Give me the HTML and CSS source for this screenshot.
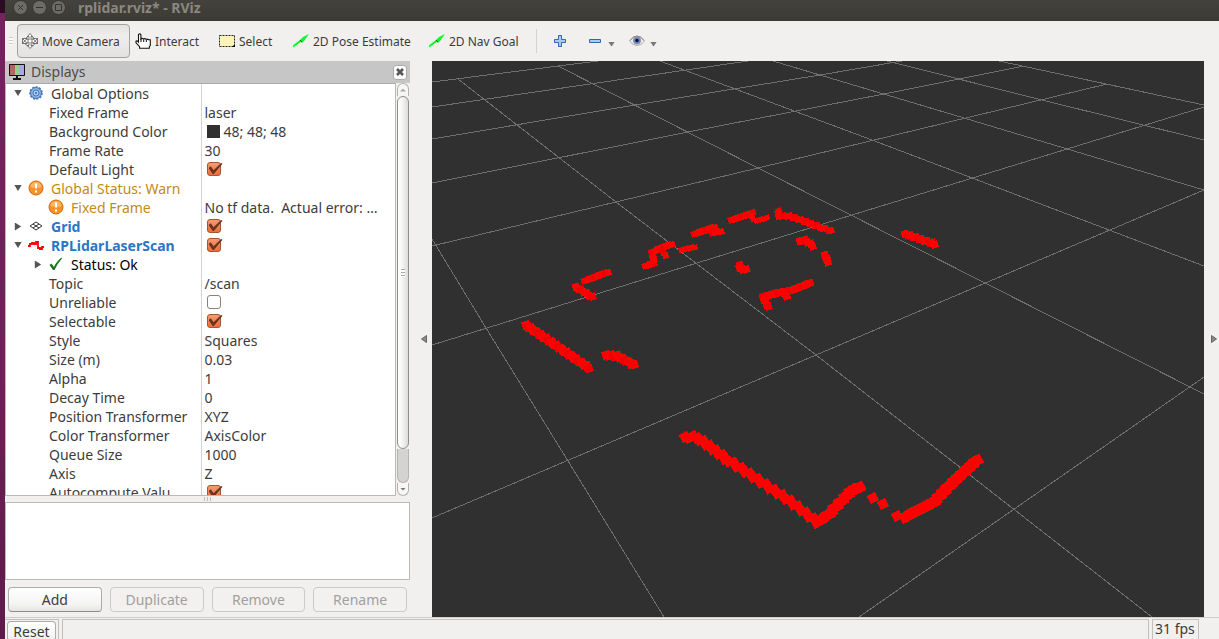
FILE: index.html
```html
<!DOCTYPE html>
<html lang="en">
<head>
<meta charset="utf-8">
<title>rplidar.rviz* - RViz</title>
<link rel="stylesheet" href="styles.css">
</head>
<body>
<div class="desktop">
<div class="window">
  <header class="titlebar">
    <button class="win-btn" aria-label="Close"><svg viewBox="0 0 15 15"><circle cx="7.500" cy="7.500" r="7"/><path d="M5 5l5 5M10 5l-5 5"/></svg></button>
    <button class="win-btn" aria-label="Minimize"><svg viewBox="0 0 15 15"><circle cx="7.500" cy="7.500" r="7"/><path d="M4 7.500h7"/></svg></button>
    <button class="win-btn" aria-label="Maximize"><svg viewBox="0 0 15 15"><circle cx="7.500" cy="7.500" r="7"/><path d="M4.500 4.500h6v6h-6z"/></svg></button>
    <h1 class="title">rplidar.rviz* - RViz</h1>
  </header>

  <nav class="toolbar" aria-label="Tools">
    <span class="grip"></span>
    <button class="tool tool-active w-move">
      <svg class="i16" viewBox="0 0 16 16"><g fill="#fff" stroke="#555" stroke-width=".8"><path d="M8 .5L10.500 3.500H9V7h2V5.500H15.500V10.500H11V9H9v3.500h1.500L8 15.500 5.500 12.500H7V9H5v1.500H.5v-5H5V7h2V3.500H5.500z"/><path d="M.5 5.500L5 10.500M5 5.500L.5 10.500M11 5.500l4.500 5M15.500 5.500l-4.500 5M3 10.500q2 3 3 2.500M13 10.500q-2 3-3 2.500M4 5.500q1-2 2-2M12 5.500q-1-2-2-2" fill="none"/></g></svg>
      <span>Move Camera</span></button>
    <button class="tool w-interact">
      <svg class="i16" viewBox="0 0 16 16"><path d="M3.500 9V1.500q1.200-1.300 2.400 0V6q1-1.200 2.600 0 1.300-.8 2.600.3 1.200-.6 2.600.5h1.600v5.700l-1 1.200v1.600H4.600v-1.600L1 9.800V8.200q1-.8 2.500.8z" fill="#fff" stroke="#111" stroke-width="1.100"/><path d="M6 6v3M8.700 6.500V9M11.300 7v2" stroke="#111"/></svg>
      <span>Interact</span></button>
    <button class="tool w-select">
      <svg class="i16" viewBox="0 0 16 16"><path d="M.5 2.500h15v11H.5z" fill="#fbf3b8" stroke="#222" stroke-dasharray="2 1"/><path d="M16 11v3h-3z" fill="#000"/></svg>
      <span>Select</span></button>
    <button class="tool w-pose">
      <svg class="i16" viewBox="0 0 16 16"><path d="M6 8l4-4 6-3-5 7-2 2z" fill="#0f2"/><path d="M0 13.500L8 7.500" stroke="#0f2" stroke-width="2"/><path d="M7 7l2 2" stroke="#087a18"/></svg>
      <span>2D Pose Estimate</span></button>
    <button class="tool w-nav">
      <svg class="i16" viewBox="0 0 16 16"><path d="M6 8l4-4 6-3-5 7-2 2z" fill="#0f2"/><path d="M0 13.500L8 7.500" stroke="#0f2" stroke-width="2"/><path d="M7 7l2 2" stroke="#087a18"/></svg>
      <span>2D Nav Goal</span></button>
    <span class="sep"></span>
    <button class="tool icon-only w-plus" aria-label="Add tool"><svg class="i12" viewBox="0 0 12 12"><path d="M4.500.5h3v4h4v3h-4v4h-3v-4h-4v-3h4z" fill="#a9cbea" stroke="#2f69ad"/></svg></button>
    <button class="tool icon-only w-drop" aria-label="Remove tool"><svg class="i12" viewBox="0 0 12 12"><path d="M.5 4.500h11v3H.5z" fill="#a9cbea" stroke="#2f69ad"/></svg><span class="drop"></span></button>
    <button class="tool icon-only w-eye" aria-label="Visibility"><svg class="i16" viewBox="0 0 16 16"><path d="M.5 8Q4 3 8 3t7.500 5Q12 12.500 8 12.500T.5 8z" fill="#eee" stroke="#aaa"/><path d="M1 7.500Q4 3 8 3t7 4.500" fill="none" stroke="#888"/><circle cx="8" cy="7.500" r="3.600" fill="#6a83c4" stroke="#8c93a8"/><circle cx="8" cy="7.500" r="1.700" fill="#0a1240"/></svg><span class="drop"></span></button>
  </nav>

  <div class="main">
    <aside class="dock">
      <div class="dock-head">
        <svg class="i16" viewBox="0 0 16 16"><path d="M.5.5h15v11H.5z" fill="#111" stroke="#111"/><path d="M1 1h5v10H1z" fill="#b56464"/><path d="M6 1h4v10H6z" fill="#8fd08f"/><path d="M10 1h5v10h-5z" fill="#a8a8e8"/><path d="M7 12h2v2h3v2H4v-2h3z" fill="#111"/></svg>
        <h2 class="dock-title">Displays</h2>
        <button class="close" aria-label="Close panel"><svg viewBox="0 0 8 8"><path d="M1 1l6 6M7 1L1 7" stroke="#555" stroke-width="2.600"/></svg></button>
      </div>
      <div class="tree-wrap">
        <div class="tree-clip">
        <table class="tree">
          <tr><th><span class="cell top"><button class="exp open" aria-label="Collapse"></button><svg class="i16" viewBox="0 0 16 16"><circle cx="8" cy="8" r="5.500" fill="#8db4e2" stroke="#4276b8"/><circle cx="8" cy="8" r="6" fill="none" stroke="#4276b8" stroke-width="1.600" stroke-dasharray="2 1.400"/><circle cx="8" cy="8" r="3" fill="#b7d0ee" stroke="#4276b8"/><circle cx="8" cy="8" r="1" fill="#2d5fa0"/></svg>Global Options</span></th><td></td></tr>
          <tr><th><span class="cell prop">Fixed Frame</span></th><td>laser</td></tr>
          <tr><th><span class="cell prop">Background Color</span></th><td><span class="color"><i class="swatch"></i>48; 48; 48</span></td></tr>
          <tr><th><span class="cell prop">Frame Rate</span></th><td>30</td></tr>
          <tr><th><label class="cell prop" for="c1">Default Light</label></th><td><input id="c1" class="check" type="checkbox" checked></td></tr>
          <tr><th><span class="cell top warn"><button class="exp open" aria-label="Collapse"></button><svg class="i16" viewBox="0 0 16 16"><circle cx="8" cy="8" r="7" fill="#f6922a" stroke="#d26a08"/><path d="M2.500 7a5.500 5 0 0 1 11 0q-5 2-11 0z" fill="#fbb765"/><path d="M8 3.500v5M8 10.500v2" stroke="#fff" stroke-width="2"/></svg>Global Status: Warn</span></th><td></td></tr>
          <tr><th><span class="cell sub warn"><svg class="i16" viewBox="0 0 16 16"><circle cx="8" cy="8" r="7" fill="#f6922a" stroke="#d26a08"/><path d="M2.500 7a5.500 5 0 0 1 11 0q-5 2-11 0z" fill="#fbb765"/><path d="M8 3.500v5M8 10.500v2" stroke="#fff" stroke-width="2"/></svg>Fixed Frame</span></th><td class="ellipsis">No tf data.&nbsp; Actual error: …</td></tr>
          <tr><th><label class="cell top link" for="c2"><button class="exp shut" aria-label="Expand"></button><svg class="i16" viewBox="0 0 16 16"><path d="M2 8l6-4 6 4-6 4zM5 6l6 4M11 6l-6 4" fill="none" stroke="#333"/></svg>Grid</label></th><td><input id="c2" class="check" type="checkbox" checked></td></tr>
          <tr><th><label class="cell top link" for="c3"><button class="exp open" aria-label="Collapse"></button><svg class="i16" viewBox="0 0 16 16"><path d="M0 9h2V7h2V6h2v1h2V5h2v6h2v1h2v-2h2" fill="none" stroke="#f00" stroke-width="1.800"/></svg>RPLidarLaserScan</label></th><td><input id="c3" class="check" type="checkbox" checked></td></tr>
          <tr><th><span class="cell sub ok"><button class="exp shut" aria-label="Expand"></button><svg class="i16" viewBox="0 0 16 16"><path d="M1.500 9l2-1.500L6 11Q8 6 13.500 1.500L14 2.500Q9 8 6.500 14H5z" fill="#19751f"/></svg>Status: Ok</span></th><td></td></tr>
          <tr><th><span class="cell prop">Topic</span></th><td>/scan</td></tr>
          <tr><th><label class="cell prop" for="c4">Unreliable</label></th><td><input id="c4" class="check" type="checkbox"></td></tr>
          <tr><th><label class="cell prop" for="c5">Selectable</label></th><td><input id="c5" class="check" type="checkbox" checked></td></tr>
          <tr><th><span class="cell prop">Style</span></th><td>Squares</td></tr>
          <tr><th><span class="cell prop">Size (m)</span></th><td>0.03</td></tr>
          <tr><th><span class="cell prop">Alpha</span></th><td>1</td></tr>
          <tr><th><span class="cell prop">Decay Time</span></th><td>0</td></tr>
          <tr><th><span class="cell prop">Position Transformer</span></th><td>XYZ</td></tr>
          <tr><th><span class="cell prop">Color Transformer</span></th><td>AxisColor</td></tr>
          <tr><th><span class="cell prop">Queue Size</span></th><td>1000</td></tr>
          <tr><th><span class="cell prop">Axis</span></th><td>Z</td></tr>
          <tr><th><label class="cell prop" for="c6">Autocompute Valu</label></th><td><input id="c6" class="check" type="checkbox" checked></td></tr>
        </table>
        </div>
        <div class="scroll">
          <span class="scroll-end up"></span>
          <span class="thumb"><i class="lines"></i></span>
          <span class="track"></span>
          <span class="scroll-end down"></span>
        </div>
      </div>
      <div class="splitter"><i></i><i></i><i></i></div>
      <div class="help"></div>
      <div class="actions">
        <button class="btn">Add</button>
        <button class="btn" disabled>Duplicate</button>
        <button class="btn" disabled>Remove</button>
        <button class="btn" disabled>Rename</button>
      </div>
    </aside>

    <button class="gutter gutter-left" aria-label="Hide left dock"><svg viewBox="0 0 6 8"><path d="M5.500.5v7L.5 4z" fill="#888" stroke="#666"/></svg></button>
    <svg class="view" viewBox="432 61 772 556" preserveAspectRatio="xMidYMid slice" role="img" aria-label="Laser scan view">
      <g class="grid-lines">
        <path d="M432 82L598 61M432 107L748 61M432 139L635 105 820 75 902 61M432 183L688 132 884 94 1024 66M432 246L758 168 1107 84M432 345L852 215 1204 107M432 518L816 355 1204 190M859 617L1204 377"/>
        <path d="M432 239L486 328 568 461 664 617M458 79L616 202 816 355 1152 617M558 66L758 168 985 283 1204 394M660 61L872 140 1204 266M773 61L964 118 1204 190M887 61L1042 100 1204 140M999 61L1204 105"/>
      </g>
      <g id="scan"></g>
    </svg>
    <button class="gutter gutter-right" aria-label="Hide right dock"><svg viewBox="0 0 6 8"><path d="M.5.5v7l5-3.500z" fill="#888" stroke="#666"/></svg></button>
  </div>

  <footer class="status">
    <div class="frame frame-reset"><button class="btn reset">Reset</button></div>
    <div class="frame frame-msg"></div>
    <div class="frame frame-fps">31 fps</div>
    <div class="corner"></div>
  </footer>
</div>
</div>
<script src="scan.js"></script>
</body>
</html>
```
FILE: styles.css
```css
* { box-sizing: border-box; }
body { margin: 0; font-family: "Noto Sans", "Open Sans", sans-serif; font-size: 14px; color: #3c3c3c; }
button { font: inherit; color: inherit; background: none; border: 0; padding: 0; margin: 0; }
h1, h2 { margin: 0; }
svg { display: block; flex: none; }
.i16 { width: 16px; height: 16px; }
.i12 { width: 12px; height: 12px; }

.desktop { height: 100vh; padding-left: 5px; background: linear-gradient(#2d0a24 13px, #702560 13px, #6b2159 60%, #5c1a4c); overflow: hidden; }
.window { height: 100%; display: flex; flex-direction: column; background: #f1f0ee; }

.titlebar { flex: 0 0 21px; display: flex; align-items: center; gap: 4px; padding: 0 8px 6px; background: linear-gradient(#43423d, #3b3a35); }
.win-btn svg { width: 15px; height: 15px; fill: #6d6b65; stroke: #35342f; }
.title { font-size: 14px; line-height: 15px; color: #8a8880; padding-left: 8px; }

.toolbar { flex: 0 0 40px; display: flex; align-items: center; padding: 0 4px; font-size: 12px; }
.grip { width: 4px; height: 8px; margin-right: 4px; background: repeating-linear-gradient(#ccc 0 1px, #fafafa 1px 3px); }
.tool { height: 34px; display: flex; align-items: center; gap: 4px; padding: 0 5px; white-space: nowrap; }
.tool-active { border: 1px solid #a3a19d; border-radius: 4px; background: linear-gradient(#e3e2e0, #efeeed 35%, #e3e2e0); padding: 0 4px; }
.w-move { width: 113px; }
.w-interact { width: 84px; }
.w-select { width: 74px; }
.w-pose { width: 136px; }
.w-nav { width: 112px; }
.sep { width: 1px; height: 24px; background: #d5d3d0; }
.icon-only { gap: 7px; }
.w-plus { width: 34px; padding-left: 17px; }
.w-drop { width: 53px; padding-left: 18px; }
.w-eye { padding-left: 5px; gap: 5px; }
.drop { width: 7px; height: 5px; margin-top: 6px; background: #777; clip-path: polygon(0 0, 100% 0, 50% 100%); }

.main { flex: 1; min-height: 0; display: flex; }
.dock { flex: 0 0 405px; display: flex; flex-direction: column; min-height: 0; }
.dock-head { flex: 0 0 22px; display: flex; align-items: center; gap: 6px; padding: 0 3px 0 4px; background: #c6c6c6; }
.dock-title { flex: 1; font-size: 14px; line-height: 22px; font-weight: 400; color: #4c4c4c; }
.close { width: 14px; height: 15px; display: grid; place-items: center; background: #fafafa; border: 1px solid #aaa; border-radius: 3px; }
.close svg { width: 8px; height: 8px; }

.tree-wrap { flex: 1; min-height: 0; display: flex; }
.tree-clip { flex: 1; overflow: hidden; background: #fff; border: 1px solid #bbb9b6; border-top-color: #aaa; }
.tree { width: 100%; border-collapse: collapse; table-layout: fixed; line-height: 19px; }
.tree th { width: 195px; padding: 0; font-weight: 400; text-align: left; border-right: 1px solid #d4d4d4; }
.tree td { height: 19px; padding: 0 0 0 3px; white-space: nowrap; }
.tree .ellipsis { overflow: hidden; text-overflow: ellipsis; }
.cell { height: 19px; display: flex; align-items: center; white-space: nowrap; }
.prop { padding-left: 43px; }
.top { padding-left: 8px; }
.top .i16 { margin: 0 7px 2px 6px; }
.sub { padding-left: 28px; }
.sub .i16 { margin: 0 7px 2px 6px; }
.sub > .i16:first-child { margin-left: 14px; }
.warn { color: #c58a12; }
.link { color: #2a76c6; font-weight: 700; }
.ok { color: #000; }
.exp { width: 8px; height: 8px; background: #555; }
.open { clip-path: polygon(0 0, 100% 0, 50% 80%); }
.shut { clip-path: polygon(10% 0, 90% 50%, 10% 100%); }
.color { display: flex; align-items: center; gap: 4px; padding-left: 2px; }
.swatch { width: 13px; height: 13px; background: #303030; }

.check { appearance: none; position: relative; display: block; width: 14px; height: 14px; margin: 0 0 1px 2px; border: 1px solid #8b8178; border-radius: 3px; background: #fff; }
.check:checked { border-color: #a8542f; background: linear-gradient(#f79a72, #ec6c3c); }
.check:checked::after { content: ""; position: absolute; left: 1px; top: 0; width: 14px; height: 11px; background: #6a3420; clip-path: polygon(0 45%, 16% 30%, 36% 65%, 90% 0, 100% 6%, 38% 100%, 30% 100%); }

.scroll { flex: 0 0 14px; display: flex; flex-direction: column; padding: 0 1px; background: #f1f0ee; }
.scroll-end { flex: 0 0 13px; display: grid; place-items: center; border: 1px solid #b5b3b0; background: #f6f6f5; }
.scroll-end::before { content: ""; width: 6px; height: 3px; background: #777; }
.up { border-radius: 6px 6px 0 0; border-bottom: 0; }
.up::before { background: #aaa; clip-path: polygon(50% 0, 100% 100%, 0 100%); }
.down { border-radius: 0 0 6px 6px; border-top: 0; }
.down::before { clip-path: polygon(0 0, 100% 0, 50% 100%); }
.thumb { flex: 1; display: grid; place-items: center; border: 1px solid #918f8c; border-radius: 6px; background: linear-gradient(90deg, #fff, #f6f6f5 40%, #dcdbd9); }
.lines { width: 4px; height: 8px; background: repeating-linear-gradient(#aaa 0 1px, #fff 1px 3px); }
.track { flex: 0 0 34px; background: #d5d3d1; border: 1px solid #b5b3b0; border-top: 0; border-radius: 0 0 6px 6px; }

.splitter { flex: 0 0 6px; display: flex; gap: 2px; justify-content: center; align-items: center; }
.splitter i { width: 1px; height: 4px; background: #bbb; }
.help { flex: 0 0 78px; background: #fff; border: 1px solid #bbb9b6; }
.actions { flex: 0 0 37px; display: grid; grid-template-columns: repeat(4, 1fr); gap: 8px; align-items: center; padding: 2px 3px 0; }
.btn { height: 25px; border: 1px solid #aeaca8; border-bottom-color: #8e8c88; border-radius: 4px; background: linear-gradient(#fff, #f4f4f3 70%, #e6e5e3); line-height: 22px; }
.btn:disabled { color: #a2a09d; border-color: #cccac7; background: #f2f1f0; }

.gutter { display: flex; align-items: center; }
.gutter svg { width: 6px; height: 8px; }
.gutter-left { flex: 0 0 22px; padding-left: 11px; }
.gutter-right { flex: 0 0 15px; padding-left: 7px; }
.view { flex: 1; min-width: 0; height: 100%; background: #303030; }
.grid-lines path { fill: none; stroke: #6e6e6e; stroke-width: 1; shape-rendering: crispEdges; }
#scan rect { shape-rendering: crispEdges; }

.status { flex: 0 0 22px; display: flex; gap: 3px; padding-top: 1px; border-top: 1px solid #cfcdca; overflow: hidden; }
.frame { border: 1px solid #c2c0bd; border-bottom: 0; height: 30px; }
.frame-reset { width: 54px; padding: 1px 2px; border-left: 0; }
.reset { display: block; width: 100%; height: 22px; line-height: 20px; }
.frame-msg { flex: 1; }
.frame-fps { width: 47px; padding-left: 2px; line-height: 18px; white-space: nowrap; }
.corner { width: 17px; }
```
FILE: scan.js
```js
// Each segment: square size, spacing, sideways jitter, then the points of its centre line.
const segments = [
  [8, 3, 1, [[526, 325], [589, 368]]],
  [8, 3, 1, [[606, 355], [617, 356], [634, 365]]],
  [6, 3, 1, [[584, 281], [608, 272]]],
  [7, 3, 1, [[576, 287], [592, 297]]],
  [6, 3, 1, [[645, 266], [654, 263], [652, 252], [658, 249], [672, 244]]],
  [6, 3, 1, [[663, 252], [666, 255]]],
  [5, 3, 1, [[681, 250], [695, 247]]],
  [6, 3, 1, [[694, 234], [715, 227]]],
  [6, 3, 1, [[712, 233], [721, 231]]],
  [6, 3, 1, [[731, 220], [753, 213]]],
  [5, 3, 1, [[751, 216], [756, 221], [767, 218]]],
  [6, 3, 1, [[779, 211], [778, 216], [790, 216], [820, 227], [831, 231]]],
  [7, 3, 1, [[800, 241], [805, 240], [813, 246]]],
  [7, 3, 1, [[740, 265], [740, 268], [746, 270]]],
  [7, 3, 1, [[810, 283], [790, 291], [777, 293], [763, 297], [768, 307]]],
  [6, 3, 1, [[786, 297], [787, 296]]],
  [7, 3, 1, [[825, 255], [828, 262]]],
  [7, 3, 1, [[905, 234], [935, 244]]],
  [9, 4, 2, [[685, 437], [697, 437], [725, 458]]],
  [9, 5, 2, [[725, 458], [790, 501], [817, 522]]],
  [10, 4, 1, [[819, 521], [829, 514], [853, 489], [860, 488]]],
  [9, 9, 0, [[873, 498]]],
  [9, 9, 0, [[883, 504]]],
  [9, 9, 0, [[897, 516]]],
  [10, 3, 1, [[905, 517], [934, 502], [949, 486], [977, 460]]]
];

const svgNs = "http://www.w3.org/2000/svg";
const layer = document.getElementById("scan");
let count = 0;

function addSquare(x, y, size, angle) {
  const r = document.createElementNS(svgNs, "rect");
  r.setAttribute("x", -size / 2);
  r.setAttribute("y", -size / 2);
  r.setAttribute("width", size);
  r.setAttribute("height", size);
  r.setAttribute("fill", size < 9 && count % 4 === 1 ? "#ee0000" : "#ff0000");
  r.setAttribute("transform", `translate(${x.toFixed(1)} ${y.toFixed(1)}) rotate(${angle})`);
  layer.appendChild(r);
  count += 1;
}

for (const [size, step, jitter, points] of segments) {
  const angle = size > 8 ? -30 : -18;
  addSquare(points[0][0], points[0][1], size, angle);
  for (let i = 1; i < points.length; i += 1) {
    const [x0, y0] = points[i - 1];
    const [x1, y1] = points[i];
    const dx = x1 - x0;
    const dy = y1 - y0;
    const length = Math.hypot(dx, dy);
    const n = Math.max(1, Math.round(length / step));
    for (let k = 1; k <= n; k += 1) {
      const side = (k % 2 ? 1 : -1) * jitter / 2;
      addSquare(x0 + dx * k / n - dy / length * side, y0 + dy * k / n + dx / length * side, size, angle);
    }
  }
}
```
